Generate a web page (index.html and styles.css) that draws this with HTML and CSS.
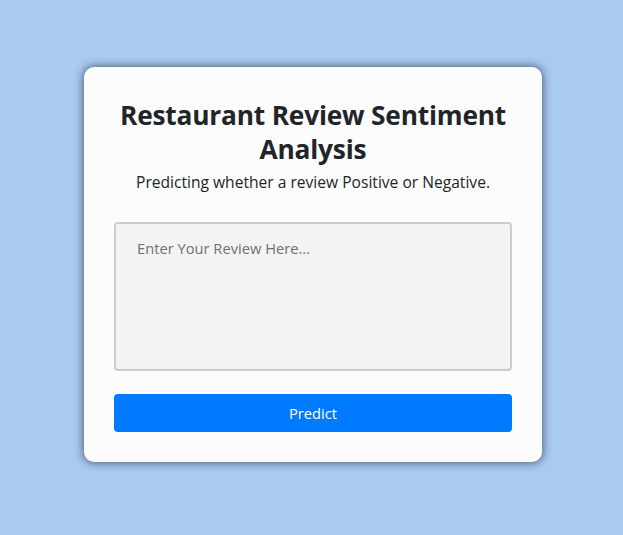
FILE: index.html
```html
<!DOCTYPE html>
<html lang="en">
<head>
<meta charset="utf-8">
<title>Restaurant Review Sentiment Analysis</title>
<link rel="stylesheet" href="styles.css">
</head>
<body>
<main class="page">
  <section class="card">
    <h1 class="title">Restaurant Review Sentiment Analysis</h1>
    <p class="subtitle">Predicting whether a review Positive or Negative.</p>
    <form class="form">
      <textarea class="review" placeholder="Enter Your Review Here..."></textarea>
      <button type="button" class="predict">Predict</button>
    </form>
  </section>
</main>
</body>
</html>
```
FILE: styles.css
```css
* { box-sizing: border-box; }
html, body { margin: 0; padding: 0; }
body {
  background: #a9cbf0;
  font-family: "Open Sans", "Noto Sans", sans-serif;
  color: #212529;
}
.page {
  min-height: 535px;
  display: flex;
  align-items: center;
  justify-content: center;
  padding-left: 3px;
  padding-bottom: 6px;
}
.card {
  width: 458px;
  background: #fcfcfc;
  border-radius: 10px;
  box-shadow: 0 0 8px 1px rgba(30, 40, 60, 0.65);
  padding: 31px 30px 30px;
  display: flex;
  flex-direction: column;
}
.title {
  margin: 0;
  text-align: center;
  font-size: 26.3px;
  line-height: 34px;
  font-weight: 700;
  letter-spacing: -0.2px;
  color: #212529;
}
.subtitle {
  margin: 4px 0 0;
  text-align: center;
  font-size: 15.6px;
  line-height: 24px;
  color: #212529;
}
.form {
  margin-top: 28px;
  display: flex;
  flex-direction: column;
  gap: 23px;
}
.review {
  width: 100%;
  height: 149px;
  border: 2px solid #cccccc;
  border-radius: 4px;
  background: #f3f3f3;
  padding: 13px 21px;
  font-family: inherit;
  font-size: 14.7px;
  line-height: 22px;
  resize: none;
  color: #495057;
}
.review::placeholder { color: #707070; }
.predict {
  height: 38px;
  width: 100%;
  border: none;
  border-radius: 4px;
  background: #007bff;
  color: #ffffff;
  font-family: inherit;
  font-size: 14.7px;
  cursor: pointer;
}
```
